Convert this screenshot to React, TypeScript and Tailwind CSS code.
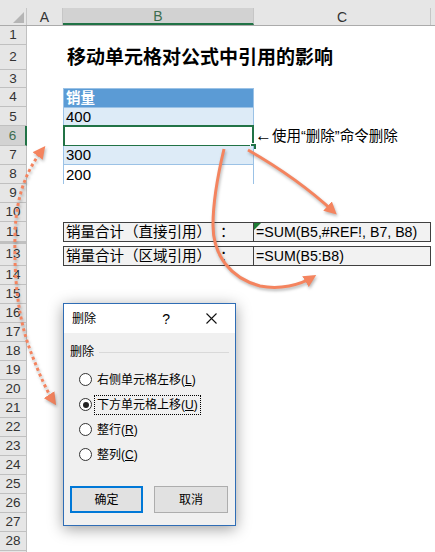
import React from "react";

type RowDef = { n: string; h: string; sel?: boolean; hidden?: boolean };

const rows: RowDef[] = [
  { n: "1", h: "h-[19px]" },
  { n: "2", h: "h-[25px]" },
  { n: "3", h: "h-[18px]" },
  { n: "4", h: "h-[19.2px]" },
  { n: "5", h: "h-[19.2px]" },
  { n: "6", h: "h-[19.2px]", sel: true },
  { n: "7", h: "h-[19.2px]" },
  { n: "8", h: "h-[19.2px]" },
  { n: "9", h: "h-[19.2px]" },
  { n: "10", h: "h-[19.2px]" },
  { n: "11", h: "h-[19.2px]" },
  { n: "", h: "h-[2px]", hidden: true },
  { n: "13", h: "h-[22px]" },
  { n: "14", h: "h-[19px]" },
  { n: "15", h: "h-[19px]" },
  { n: "16", h: "h-[19px]" },
  { n: "17", h: "h-[19px]" },
  { n: "18", h: "h-[19px]" },
  { n: "19", h: "h-[19px]" },
  { n: "20", h: "h-[19px]" },
  { n: "21", h: "h-[19px]" },
  { n: "22", h: "h-[19px]" },
  { n: "23", h: "h-[19px]" },
  { n: "24", h: "h-[19px]" },
  { n: "25", h: "h-[19px]" },
  { n: "26", h: "h-[19px]" },
  { n: "27", h: "h-[19px]" },
  { n: "28", h: "h-[19px]" },
  { n: "", h: "h-[19px]" },
];

function BCell({ n }: { n: string }) {
  const base = "w-[191px] shrink-0 relative";
  switch (n) {
    case "2":
      return (
        <div className={`${base} overflow-visible`}>
          <div className="absolute left-[4px] top-[2px] whitespace-nowrap text-[19px] font-bold leading-[22px] text-black">
            移动单元格对公式中引用的影响
          </div>
        </div>
      );
    case "4":
      return (
        <div className={`${base} bg-[#5b9bd5] border-x border-t border-[#9bc2e6] text-white font-bold text-[14.5px] leading-[18px] pl-[2px] flex items-center`}>
          销量
        </div>
      );
    case "5":
      return (
        <div className={`${base} bg-[#ddebf7] border-x border-t border-[#9bc2e6] text-[15px] leading-[18px] pl-[2px] flex items-end`}>
          400
        </div>
      );
    case "6":
      return (
        <div className={`${base} bg-white border-2 border-[#217346] -mt-[1px] h-[calc(100%+2px)]`}>
          <div className="absolute -right-[5px] -bottom-[5px] w-[7px] h-[7px] bg-[#217346] border border-white" />
        </div>
      );
    case "7":
      return (
        <div className={`${base} bg-[#ddebf7] border-x border-b border-[#9bc2e6] text-[15px] leading-[18px] pl-[2px] flex items-end`}>
          300
        </div>
      );
    case "8":
      return (
        <div className={`${base} bg-white border-x border-[#9bc2e6] text-[15px] leading-[18px] pl-[2px] flex items-end`}>
          200
        </div>
      );
    case "11":
      return (
        <div className={`${base} bg-[#f2f2f2] border border-[#404040] text-[14.5px] leading-[18px] pl-[2px] flex items-center whitespace-nowrap`}>
          销量合计（直接引用）<span className="ml-[9px]">：</span>
        </div>
      );
    case "13":
      return (
        <div className={`${base} mt-[2px] h-[20px] bg-[#f2f2f2] border border-[#404040] text-[14.5px] leading-[18px] pl-[2px] flex items-center whitespace-nowrap`}>
          销量合计（区域引用）<span className="ml-[9px]">：</span>
        </div>
      );
    default:
      return <div className={base} />;
  }
}

function CCell({ n }: { n: string }) {
  const base = "w-[177px] shrink-0 relative";
  switch (n) {
    case "6":
      return (
        <div className={`${base} text-[14.5px] leading-[18px] pl-[1px] flex items-center whitespace-nowrap`}>
          <span className="text-[17px] leading-[18px]">←</span>使用“删除”命令删除
        </div>
      );
    case "11":
      return (
        <div className={`${base} bg-[#f2f2f2] border-y border-r border-[#404040] text-[14.2px] leading-[18px] pl-[2px] flex items-center whitespace-nowrap`}>
          <svg className="absolute left-0 top-0" width="7" height="7" viewBox="0 0 7 7">
            <path d="M0 0 L7 0 L0 7 Z" fill="#1e7b34" />
          </svg>
          =SUM(B5,#REF!, B7, B8)
        </div>
      );
    case "13":
      return (
        <div className={`${base} mt-[2px] h-[20px] bg-[#f2f2f2] border-y border-r border-[#404040] text-[14.2px] leading-[18px] pl-[2px] flex items-center whitespace-nowrap`}>
          =SUM(B5:B8)
        </div>
      );
    default:
      return <div className={base} />;
  }
}

function Radio({ checked, children }: { checked?: boolean; children: React.ReactNode }) {
  return (
    <div className="h-[25px] flex items-center pl-[15px]">
      <div className="w-[13px] h-[13px] rounded-full border border-[#333] bg-white flex items-center justify-center shrink-0">
        {checked && <div className="w-[6px] h-[6px] rounded-full bg-[#222]" />}
      </div>
      <div
        className={`ml-[2px] px-[2px] h-[20px] flex items-center whitespace-nowrap border ${
          checked ? "border-dotted border-black" : "border-transparent"
        }`}
      >
        {children}
      </div>
    </div>
  );
}

export default function App() {
  return (
    <div className="relative w-[435px] h-[552px] overflow-hidden bg-white text-black font-['Liberation_Sans','Noto_Sans_CJK_SC',sans-serif]">
      {/* top strip */}
      <div className="h-[8px] bg-[#e6e6e6]" />
      {/* column header */}
      <div className="flex h-[18px] bg-[#e6e6e6] border-b border-[#ababab] text-[14px] text-[#333]">
        <div className="w-[27px] shrink-0 border-r border-[#c6c6c6] relative">
          <svg className="absolute left-[13px] top-[4px]" width="11" height="11" viewBox="0 0 11 11">
            <path d="M11 0 L11 11 L0 11 Z" fill="#b5b5b5" />
          </svg>
        </div>
        <div className="w-[36px] shrink-0 border-r border-[#c6c6c6] flex items-center justify-center leading-none">A</div>
        <div className="w-[191px] shrink-0 bg-[#d2d2d2] border-r border-[#c6c6c6] border-b-2 border-b-[#217346] flex items-center justify-center leading-none text-[#3d6e4f]">B</div>
        <div className="w-[177px] shrink-0 border-r border-[#c6c6c6] flex items-center justify-center leading-none">C</div>
        <div className="flex-1" />
      </div>
      {/* rows */}
      {rows.map((r, i) => (
        <div key={i} className={`flex ${r.h}`}>
          <div
            className={`w-[27px] shrink-0 border-b border-[#c0c0c0] flex items-center justify-center text-[13.5px] leading-none ${
              r.sel
                ? "bg-[#d2d2d2] border-r-2 border-r-[#217346] text-[#3d6e4f]"
                : "bg-[#e6e6e6] border-r border-r-[#c0c0c0] text-[#333]"
            } ${r.hidden ? "border-t border-t-[#c0c0c0]" : ""}`}
          >
            {r.n}
          </div>
          <div className="w-[36px] shrink-0" />
          <BCell n={r.n} />
          <CCell n={r.n} />
          <div className="flex-1" />
        </div>
      ))}

      {/* arrows */}
      <svg
        className="absolute left-0 top-0 pointer-events-none drop-shadow-[1px_2px_1.5px_rgba(0,0,0,0.28)]"
        width="435"
        height="552"
        viewBox="0 0 435 552"
      >
        <defs>
          <marker id="ah" viewBox="0 0 10 10" refX="7" refY="5" markerWidth="4.2" markerHeight="4.2" orient="auto-start-reverse">
            <path d="M0 0 L10 5 L0 10 Z" fill="#f4845f" />
          </marker>
        </defs>
        <path
          d="M43 149 C 30 166, 16 190, 15 235 C 14 280, 18 320, 32 355 C 39 373, 46 390, 54 402"
          fill="none"
          stroke="#f4845f"
          strokeWidth="3"
          strokeDasharray="3 3"
          markerStart="url(#ah)"
          markerEnd="url(#ah)"
        />
        <path
          d="M224 149 C 219 170, 213 200, 213 225 C 213 255, 230 278, 260 286 C 280 290, 300 285, 313 277"
          fill="none"
          stroke="#f4845f"
          strokeWidth="3"
          markerEnd="url(#ah)"
        />
        <path
          d="M248 150 C 276 166, 307 187, 334 212"
          fill="none"
          stroke="#f4845f"
          strokeWidth="3"
          markerEnd="url(#ah)"
        />
      </svg>

      {/* dialog */}
      <div className="absolute left-[63px] top-[303px] w-[173px] h-[223px] border border-[#2f6db5] bg-[#f0f0f0] shadow-[0_3px_14px_rgba(0,0,0,0.38)] text-[12px] leading-[14px] flex flex-col">
        <div className="h-[29px] bg-white flex items-center pl-[8px] shrink-0">
          <span>删除</span>
          <span className="ml-auto mr-[36px] text-[14px]">?</span>
          <svg className="mr-[18px]" width="11" height="11" viewBox="0 0 11 11">
            <path d="M0.5 0.5 L10.5 10.5 M10.5 0.5 L0.5 10.5" stroke="#111" strokeWidth="1.1" />
          </svg>
        </div>
        <div className="flex flex-col pt-[12px]">
          <div className="flex items-center pl-[6px] pr-[6px] h-[14px]">
            <span>删除</span>
            <div className="flex-1 h-px bg-[#d9d9d9] ml-[5px]" />
          </div>
          <div className="mt-[8px]">
            <Radio>
              右侧单元格左移(<span className="underline">L</span>)
            </Radio>
            <Radio checked>
              下方单元格上移(<span className="underline">U</span>)
            </Radio>
            <Radio>
              整行(<span className="underline">R</span>)
            </Radio>
            <Radio>
              整列(<span className="underline">C</span>)
            </Radio>
          </div>
          <div className="flex pl-[6px] gap-[11px] mt-[19px]">
            <div className="w-[73px] h-[27px] bg-[#e1e1e1] border-2 border-[#0078d7] flex items-center justify-center">确定</div>
            <div className="w-[74px] h-[27px] bg-[#e1e1e1] border border-[#adadad] flex items-center justify-center">取消</div>
          </div>
        </div>
      </div>
    </div>
  );
}
